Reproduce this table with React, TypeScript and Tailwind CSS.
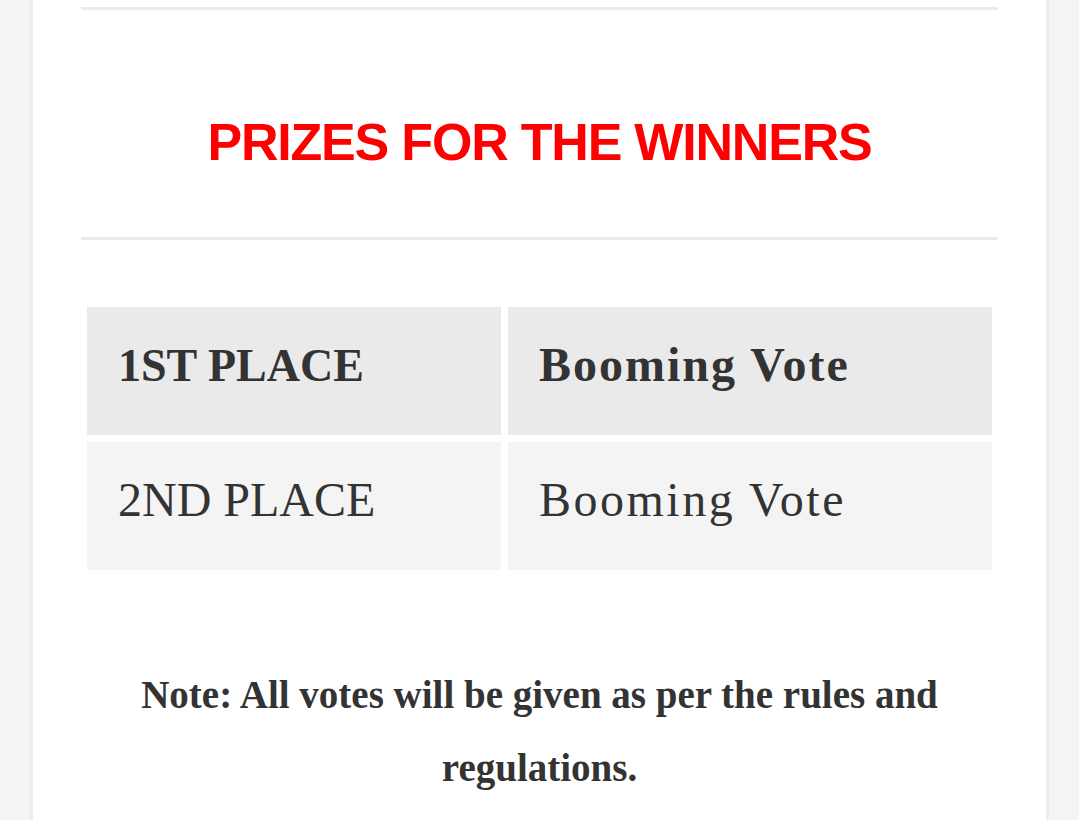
export default function App() {
  const rows = [
    { place: '1ST PLACE', prize: 'Booming Vote', bold: true, bg: 'bg-[#eaeaea]' },
    { place: '2ND PLACE', prize: 'Booming Vote', bold: false, bg: 'bg-[#f4f4f4]' },
  ]

  return (
    <div className="min-h-[820px] bg-[#f4f4f4] px-[30px]">
      <div className="min-h-[820px] bg-white border-x-[3px] border-[#ececec] px-[48px] pt-[7px]">
        <div className="h-[3px] bg-[#ebebeb]" />

        {/* Heading */}
        <h2
          className="text-center text-[52px] font-bold leading-[68px] tracking-[-1.2px] text-[#ff0000] pt-[98px] pb-[61px]"
          style={{ fontFamily: '"Liberation Sans", Arial, sans-serif' }}>
          PRIZES FOR THE WINNERS
        </h2>

        <div className="h-[3px] bg-[#ebebeb]" />

        {/* Prize table */}
        <div
          className="mt-[61px] grid grid-cols-[414px_1fr] gap-[7px] p-[6px] text-[#333]"
          style={{ fontFamily: '"Liberation Serif", "Times New Roman", serif' }}>
          {rows.map(r => (
            <>
              <div key={r.place + 'a'} className={`${r.bg} h-[128px] flex items-center pl-[31px] pb-[12px] ${r.bold ? 'font-bold text-[46px]' : 'text-[48px]'}`}>
                {r.place}
              </div>
              <div key={r.place + 'b'} className={`${r.bg} h-[128px] flex items-center pl-[31px] pb-[12px] text-[48px] ${r.bold ? 'font-bold tracking-[2px]' : 'tracking-[2.5px]'}`}>
                {r.prize}
              </div>
            </>
          ))}
        </div>

        {/* Note */}
        <p
          className="mt-[82px] text-center text-[39px] font-bold leading-[73px] text-[#333] px-[30px]"
          style={{ fontFamily: '"Liberation Serif", "Times New Roman", serif' }}>
          Note: All votes will be given as per the rules and regulations.
        </p>
      </div>
    </div>
  )
}
